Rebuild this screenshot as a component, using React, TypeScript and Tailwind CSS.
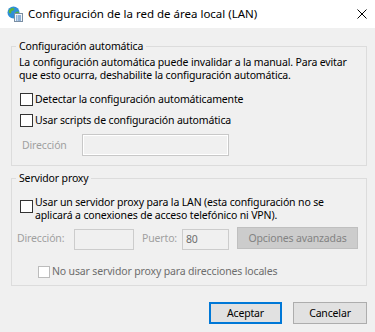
import React from 'react';

function LanIcon() {
  return (
    <svg width="16" height="16" viewBox="0 0 16 16">
      <circle cx="6.5" cy="6.5" r="6" fill="#2f8fd8" />
      <path d="M2.5 3.5 C4 2 6 1.5 7.5 2.5 L6.5 4.5 L4.5 5 L4 7.5 L2.2 7 C1.5 5.5 1.8 4.5 2.5 3.5 Z" fill="#5cb43a" />
      <path d="M8.5 6 L11.5 5.5 L12.2 8 L10 10 L8.5 9 Z" fill="#5cb43a" />
      <rect x="7.5" y="7.5" width="8" height="8" fill="#f4f6f8" stroke="#7a8ea3" strokeWidth="1" />
      <rect x="9" y="9.5" width="1.5" height="1" fill="#2a6fb8" />
      <rect x="11" y="9.5" width="3" height="1" fill="#2a6fb8" />
      <rect x="9" y="11.5" width="1.5" height="1" fill="#2a6fb8" />
      <rect x="11" y="11.5" width="3" height="1" fill="#2a6fb8" />
      <rect x="9" y="13.5" width="1.5" height="1" fill="#2a6fb8" />
      <rect x="11" y="13.5" width="3" height="1" fill="#2a6fb8" />
    </svg>
  );
}

function CloseIcon() {
  return (
    <svg width="10" height="10" viewBox="0 0 10 10">
      <path d="M0.5 0.5 L9.5 9.5 M9.5 0.5 L0.5 9.5" stroke="#000" strokeWidth="1" />
    </svg>
  );
}

function Box({ disabled }: { disabled?: boolean }) {
  return (
    <span
      className={
        disabled
          ? 'block w-[12px] h-[12px] shrink-0 bg-white border border-[#bcbcbc]'
          : 'block w-[13px] h-[13px] shrink-0 bg-white border border-[#333333]'
      }
    />
  );
}

export default function App() {
  return (
    <div className="w-[375px] h-[332px] overflow-hidden bg-[#f0f0f0] text-[10.5px] leading-[13px] tracking-[-0.15px] text-black whitespace-nowrap font-['Noto_Sans',sans-serif]">
      <div className="h-[28px] bg-white flex items-center pl-[7px] pr-[8px]">
        <LanIcon />
        <span className="ml-[5px] text-[11.5px] leading-[20px] tracking-normal">Configuración de la red de área local (LAN)</span>
        <span className="ml-auto">
          <CloseIcon />
        </span>
      </div>

      <fieldset className="ml-[11px] mt-[10px] w-[356px] h-[128px] border border-[#dcdcdc] px-0 pb-0">
        <legend className="ml-[4px] px-[3px] leading-[16px]">Configuración automática</legend>
        <p className="mt-[2px] pl-[7px]">
          La configuración automática puede invalidar a la manual. Para evitar
          <br />
          que esto ocurra, deshabilite la configuración automática.
        </p>
        <label className="mt-[11px] flex items-center gap-[2px] pl-[8px]">
          <Box />
          <span>Detectar la configuración automáticamente</span>
        </label>
        <label className="mt-[8px] flex items-center gap-[2px] pl-[8px]">
          <Box />
          <span>Usar scripts de configuración automática</span>
        </label>
        <div className="mt-[7px] flex items-center pl-[10px]">
          <span className="w-[60px] text-[#a0a0a0]">Dirección</span>
          <div className="w-[147px] h-[22px] border border-[#c8c8c8] bg-[#f0f0f0] shadow-[inset_0_0_0_1px_#ffffff]" />
        </div>
      </fieldset>

      <fieldset className="ml-[11px] mt-[4px] w-[356px] h-[116px] border border-[#dcdcdc] px-0 pb-0">
        <legend className="ml-[4px] px-[3px] leading-[16px]">Servidor proxy</legend>
        <label className="mt-[10px] flex items-start gap-[2px] pl-[8px]">
          <span className="mt-[4px]">
            <Box />
          </span>
          <span>
            Usar un servidor proxy para la LAN (esta configuración no se
            <br />
            aplicará a conexiones de acceso telefónico ni VPN).
          </span>
        </label>
        <div className="mt-[5px] flex items-start pl-[5px]">
          <span className="mt-[5px] w-[57px] text-[#a0a0a0]">Dirección:</span>
          <div className="mt-[2px] w-[60px] h-[21px] border border-[#cccccc] bg-[#f0f0f0]" />
          <span className="mt-[5px] ml-[8px] w-[40px] text-[#a0a0a0]">Puerto:</span>
          <div className="mt-[2px] w-[47px] h-[21px] border border-[#cccccc] bg-[#f0f0f0] pl-[3px] pt-[3px] text-[#6d6d6d]">80</div>
          <div className="ml-[8px] w-[121px] h-[22px] border border-[#bfbfbf] bg-[#cccccc] flex items-center justify-center text-[#838383]">
            Opciones avanzadas
          </div>
        </div>
        <label className="mt-[15px] flex items-start gap-[2px] pl-[26px]">
          <span className="mt-[1px]">
            <Box disabled />
          </span>
          <span className="text-[#6d6d6d]">No usar servidor proxy para direcciones locales</span>
        </label>
      </fieldset>

      <div className="mt-[16px] flex justify-end gap-[11px] pr-[8px]">
        <button className="w-[73px] h-[22px] border-2 border-[#0078d7] bg-[#e1e1e1]">Aceptar</button>
        <button className="w-[74px] h-[22px] border border-[#adadad] bg-[#e1e1e1]">Cancelar</button>
      </div>
    </div>
  );
}
